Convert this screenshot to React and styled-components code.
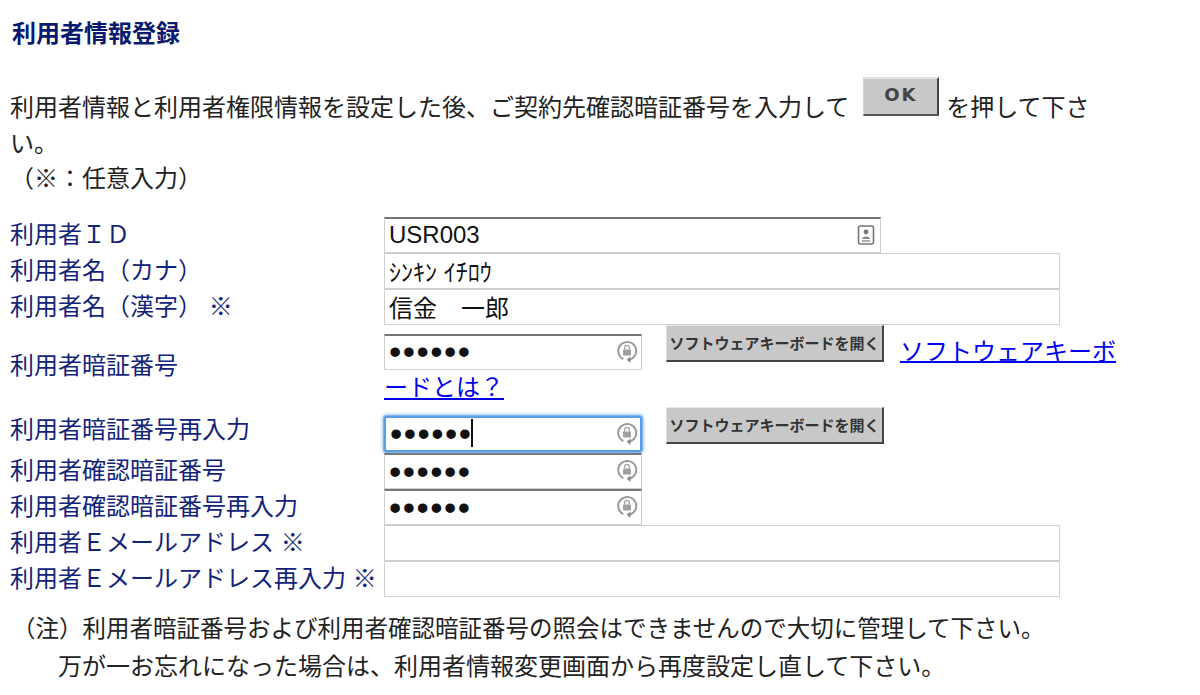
import React from "react";
import styled, { createGlobalStyle } from "styled-components";

const fontStack = `"Liberation Sans", "Noto Sans CJK JP", sans-serif`;

const GlobalStyle = createGlobalStyle`
    html, body {
        margin: 0;
        padding: 0;
        background: #ffffff;
    }
    body {
        font-family: ${fontStack};
        color: #222222;
        overflow: hidden;
    }
`;

const fields = [
    { label: "利用者ＩＤ", value: "USR003", width: 497, strong: true, icon: "card" },
    { label: "利用者名（カナ）", value: "ｼﾝｷﾝ ｲﾁﾛｳ", width: 676 },
    { label: "利用者名（漢字） ※", value: "信金　一郎", width: 676 },
];

const CardIcon = () => (
    <svg width="18" height="20" viewBox="0 0 18 20" fill="none">
        <rect x="1.5" y="1" width="15" height="18" rx="2" stroke="#777" strokeWidth="1.6" />
        <circle cx="9" cy="7" r="2.4" fill="#777" />
        <path d="M5 14 C5 10.5 13 10.5 13 14 Z" fill="#888" />
        <path d="M5 16h8" stroke="#888" strokeWidth="1.4" />
    </svg>
);

const LockIcon = () => (
    <svg width="22" height="24" viewBox="0 0 22 24" fill="none">
        <path
            d="M6.5 18.6 A9 9 0 1 1 13 19.8"
            stroke="#999999"
            strokeWidth="2"
            strokeLinecap="round"
        />
        <path d="M14.5 16.6 L10.6 19.8 L14.5 23 Z" fill="#8a8a8a" />
        <rect x="7" y="9.4" width="8" height="6" rx="1" fill="#a0a0a0" />
        <path d="M8.6 9.5 V7.8 a2.4 2.4 0 0 1 4.8 0 V9.5" stroke="#a0a0a0" strokeWidth="1.2" />
    </svg>
);

function TextField({ field }) {
    return (
        <FieldWrap $width={field.width}>
            <Input type="text" readOnly value={field.value} $strong={field.strong} />
            {field.icon === "card" && (
                <FieldIcon>
                    <CardIcon />
                </FieldIcon>
            )}
        </FieldWrap>
    );
}

function PasswordField({ focused }) {
    return (
        <FieldWrap $width={258}>
            <Input type="password" readOnly value="aaaaaa" $strong $password $focused={focused} />
            {focused && <Caret />}
            <FieldIcon>
                <LockIcon />
            </FieldIcon>
        </FieldWrap>
    );
}

export default function App() {
    return (
        <Page>
            <GlobalStyle />
            <Title>利用者情報登録</Title>
            <Intro>
                利用者情報と利用者権限情報を設定した後、ご契約先確認暗証番号を入力して
                <OkButton type="button">OK</OkButton>
                を押して下さい。
                <br />
                （※：任意入力）
            </Intro>
            <FormGrid>
                {fields.map((field) => (
                    <React.Fragment key={field.label}>
                        <Label>{field.label}</Label>
                        <Cell>
                            <TextField field={field} />
                        </Cell>
                    </React.Fragment>
                ))}

                <Label>利用者暗証番号</Label>
                <FlowCell>
                    <PasswordField />
                    <KeyboardButton type="button">ソフトウェアキーボードを開く</KeyboardButton>
                    <HelpLink href="#">ソフトウェアキーボードとは？</HelpLink>
                </FlowCell>

                <Label>利用者暗証番号再入力</Label>
                <FlowCell>
                    <PasswordField focused />
                    <KeyboardButton type="button">ソフトウェアキーボードを開く</KeyboardButton>
                </FlowCell>

                <Label>利用者確認暗証番号</Label>
                <Cell>
                    <PasswordField />
                </Cell>

                <Label>利用者確認暗証番号再入力</Label>
                <Cell>
                    <PasswordField />
                </Cell>

                <Label>利用者Ｅメールアドレス ※</Label>
                <Cell>
                    <TextField field={{ value: "", width: 676 }} />
                </Cell>

                <Label>利用者Ｅメールアドレス再入力 ※</Label>
                <Cell>
                    <TextField field={{ value: "", width: 676 }} />
                </Cell>
            </FormGrid>
            <Notes>
                <NoteLine>（注）利用者暗証番号および利用者確認暗証番号の照会はできませんので大切に管理して下さい。</NoteLine>
                <NoteLine $indent>万が一お忘れになった場合は、利用者情報変更画面から再度設定し直して下さい。</NoteLine>
            </Notes>
        </Page>
    );
}

const Page = styled.div`
    width: 1200px;
    height: 695px;
    box-sizing: border-box;
    padding: 16px 0 0 10px;
    font-size: 24px;
    overflow: hidden;
`;

const Title = styled.h1`
    margin: 0 0 0 2px;
    font-size: 24px;
    font-weight: bold;
    line-height: 36px;
    color: #0a1a6e;
`;

const Intro = styled.p`
    width: 1100px;
    margin: 25px 0 0;
    line-height: 35.5px;
`;

const OkButton = styled.button`
    display: inline-block;
    box-sizing: border-box;
    width: 76px;
    height: 39px;
    margin: 0 7px 0 14px;
    padding: 0 0 4px;
    vertical-align: 15px;
    background: #c8c8c8;
    border: 0;
    border-top: 2px solid #e4e4e4;
    border-left: 1px solid #d8d8d8;
    border-right: 2px solid #444444;
    border-bottom: 2px solid #555555;
    font-family: "DejaVu Sans", sans-serif;
    font-size: 18px;
    font-weight: bold;
    letter-spacing: 2px;
    color: #444444;
`;

const FormGrid = styled.div`
    display: grid;
    grid-template-columns: 374px 740px;
    row-gap: 1px;
    margin-top: 20px;
    align-items: center;
`;

const Label = styled.div`
    font-size: 24px;
    line-height: 35px;
    color: #12237a;
    white-space: nowrap;
`;

const Cell = styled.div`
    display: flex;
    height: 35px;
`;

const FlowCell = styled.div`
    line-height: 36px;
    font-size: 24px;
`;

const FieldWrap = styled.span`
    position: relative;
    display: inline-block;
    width: ${(props) => props.$width}px;
    height: 36px;
    vertical-align: -5px;
`;

const Input = styled.input`
    display: block;
    box-sizing: border-box;
    width: 100%;
    height: 100%;
    margin: 0;
    padding: 0 4px;
    background: #ffffff;
    border: 1px solid #cfcfcf;
    border-top: ${(props) => (props.$strong ? "2px solid #777777" : "1px solid #cfcfcf")};
    border-radius: 0;
    outline: none;
    font-family: ${fontStack};
    font-size: ${(props) => (props.$password ? "35px" : "24px")};
    letter-spacing: ${(props) => (props.$password ? "1.5px" : "0")};
    color: #111111;
    ${(props) =>
        props.$focused &&
        `
        border: 2px solid #5a9fe6;
        border-radius: 3px;
        box-shadow: 0 0 0 1px #7db5ef, 0 0 3px 2px #a5cdf5;
    `}
`;

const FieldIcon = styled.span`
    position: absolute;
    top: 6px;
    right: 4px;
    display: flex;
    width: 22px;
    height: 24px;
    align-items: center;
    justify-content: center;
`;

const Caret = styled.span`
    position: absolute;
    top: 3px;
    left: 87px;
    width: 2px;
    height: 28px;
    background: #111111;
`;

const KeyboardButton = styled.button`
    display: inline-block;
    box-sizing: border-box;
    width: 218px;
    height: 37px;
    margin: 0 16px 0 24px;
    padding: 0;
    vertical-align: 10px;
    background: #c8c8c8;
    border: 0;
    border-top: 1px solid #e8e8e8;
    border-left: 1px solid #dddddd;
    border-right: 2px solid #444444;
    border-bottom: 2px solid #444444;
    font-family: ${fontStack};
    font-size: 15px;
    font-weight: bold;
    color: #333333;
    white-space: nowrap;
`;

const HelpLink = styled.a`
    color: #0000ee;
    text-decoration: underline;
`;

const Notes = styled.div`
    margin: 15px 0 0 2px;
`;

const NoteLine = styled.div`
    line-height: 37px;
    font-size: ${(props) => (props.$indent ? "24px" : "23.5px")};
    padding-left: ${(props) => (props.$indent ? "46px" : "0")};
`;
